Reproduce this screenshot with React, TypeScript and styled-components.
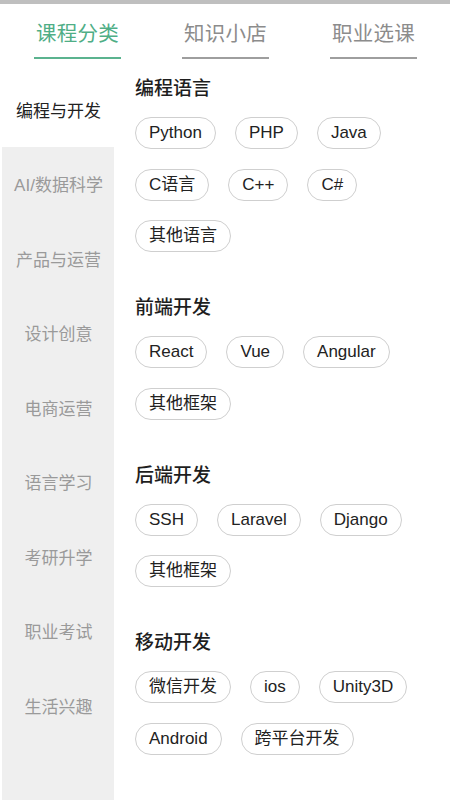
import React, { useState } from "react";
import styled, { createGlobalStyle } from "styled-components";

const GlobalStyle = createGlobalStyle`
  * { box-sizing: border-box; }
  html, body { margin: 0; padding: 0; background: #fff; }
  body { font-family: "Liberation Sans", "Noto Sans CJK SC", sans-serif; }
`;

const Page = styled.div`
  width: 450px;
  height: 800px;
  overflow: hidden;
  display: flex;
  flex-direction: column;
  background: #fff;
`;

const StatusStrip = styled.div`
  height: 4px;
  background: #bfbfbf;
  flex-shrink: 0;
`;

const TabBar = styled.div`
  display: flex;
  gap: 61px;
  padding-left: 34px;
  height: 55px;
  flex-shrink: 0;
`;

const Tab = styled.div<{ $active: boolean }>`
  width: 87px;
  display: flex;
  align-items: center;
  justify-content: center;
  font-family: "Noto Sans CJK SC", sans-serif;
  font-size: 20.5px;
  letter-spacing: 0.2px;
  color: ${(p) => (p.$active ? "#4fae86" : "#8c8c8c")};
  border-bottom: 2px solid ${(p) => (p.$active ? "#5bb38f" : "#9e9e9e")};
  padding-top: 2px;
`;

const Body = styled.div`
  flex: 1;
  display: flex;
  min-height: 0;
  padding-top: 13px;
`;

const Sidebar = styled.div`
  width: 112px;
  margin-left: 2px;
  flex-shrink: 0;
  display: flex;
  flex-direction: column;
  background: linear-gradient(#fff, #fff) top / 100% 74.5px no-repeat, #efefef;
  margin-bottom: -20px;
`;

const SideItem = styled.div<{ $active: boolean }>`
  height: 74.5px;
  flex-shrink: 0;
  display: flex;
  align-items: center;
  justify-content: center;
  font-size: 17px;
  color: ${(p) => (p.$active ? "#222" : "#9a9a9a")};
  background: ${(p) => (p.$active ? "#fff" : "#efefef")};
  padding-left: 1px;
`;

const Content = styled.div`
  flex: 1;
  padding: 2px 10px 0 21px;
  display: flex;
  flex-direction: column;
  gap: 41px;
`;

const Section = styled.div`
  display: flex;
  flex-direction: column;
`;

const Heading = styled.div`
  font-family: "Noto Sans CJK SC", sans-serif;
  font-size: 19px;
  line-height: 26px;
  height: 26px;
  color: #1e1e1e;
  margin-bottom: 17px;
  font-weight: 500;
`;

const Chips = styled.div`
  display: flex;
  flex-wrap: wrap;
  column-gap: 19px;
  row-gap: 19.5px;
`;

const Chip = styled.div`
  height: 32px;
  padding: 0 13px;
  border: 1px solid #cfcfcf;
  border-radius: 16px;
  display: flex;
  align-items: center;
  font-size: 17px;
  line-height: 20px;
  color: #222;
  white-space: nowrap;
`;

const tabs = ["课程分类", "知识小店", "职业选课"];
const sideItems = [
  "编程与开发",
  "AI/数据科学",
  "产品与运营",
  "设计创意",
  "电商运营",
  "语言学习",
  "考研升学",
  "职业考试",
  "生活兴趣",
];
const sections: { title: string; items: string[] }[] = [
  { title: "编程语言", items: ["Python", "PHP", "Java", "C语言", "C++", "C#", "其他语言"] },
  { title: "前端开发", items: ["React", "Vue", "Angular", "其他框架"] },
  { title: "后端开发", items: ["SSH", "Laravel", "Django", "其他框架"] },
  { title: "移动开发", items: ["微信开发", "ios", "Unity3D", "Android", "跨平台开发"] },
];

export default function App() {
  const [tab, setTab] = useState(0);
  const [side, setSide] = useState(0);
  return (
    <>
      <GlobalStyle />
      <Page>
        <StatusStrip />
        <TabBar>
          {tabs.map((t, i) => (
            <Tab key={t} $active={i === tab} onClick={() => setTab(i)}>
              {t}
            </Tab>
          ))}
        </TabBar>
        <Body>
          <Sidebar>
            {sideItems.map((s, i) => (
              <SideItem key={s} $active={i === side} onClick={() => setSide(i)}>
                {s}
              </SideItem>
            ))}
          </Sidebar>
          <Content>
            {sections.map((sec) => (
              <Section key={sec.title}>
                <Heading>{sec.title}</Heading>
                <Chips>
                  {sec.items.map((it) => (
                    <Chip key={it}>{it}</Chip>
                  ))}
                </Chips>
              </Section>
            ))}
          </Content>
        </Body>
      </Page>
    </>
  );
}
